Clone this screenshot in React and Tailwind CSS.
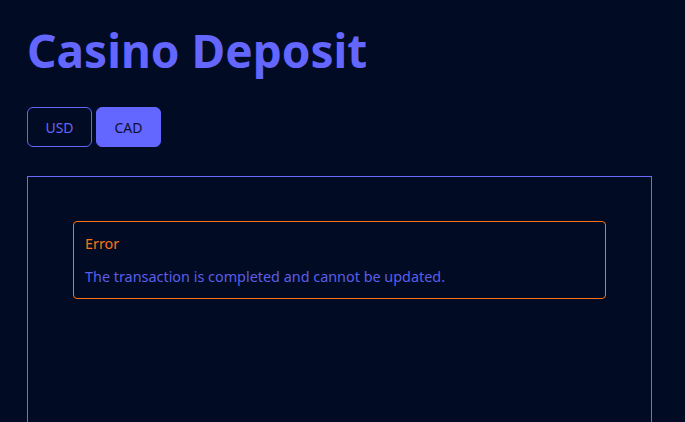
export default function App() {
  return (
    <div className="min-h-[422px] bg-[#020b24] px-[27px] pt-[22px] font-['Noto_Sans',sans-serif]">
      <h1 className="text-[46px] leading-[56px] font-bold text-[#6366ff]">Casino Deposit</h1>
      <div className="mt-[29px] flex gap-[4px]">
        <button className="h-[40px] w-[65px] rounded-[6px] border border-[#6366ff] text-[14px] text-[#6366ff]">USD</button>
        <button className="h-[40px] w-[65px] rounded-[6px] border border-[#6366ff] bg-[#6366ff] text-[14px] text-[#0b1030]">CAD</button>
      </div>
      <div className="mt-[29px] h-[260px] w-[625px] border border-[#6a6aff] px-[45px] pt-[44px]">
        <div className="rounded-[4px] border border-[#f97316] px-[11px] pt-[12px] pb-[11px]">
          <div className="text-[14.4px] leading-[20px] text-[#f97316]">Error</div>
          <div className="mt-[13px] text-[14.4px] leading-[20px] text-[#5b5ee8]">The transaction is completed and cannot be updated.</div>
        </div>
      </div>
    </div>
  );
}
